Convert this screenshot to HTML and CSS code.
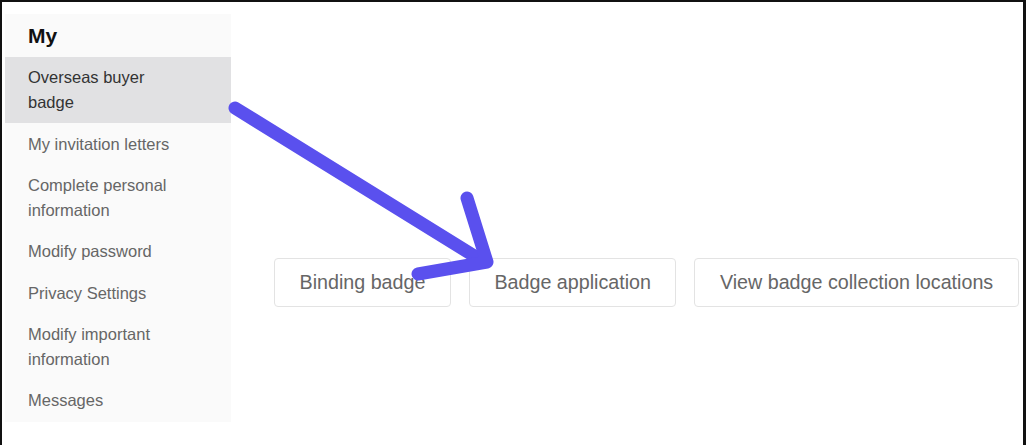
FILE: index.html
```html
<!DOCTYPE html>
<html lang="en">
<head>
    <meta charset="UTF-8">
    <meta name="viewport" content="width=device-width, initial-scale=1.0">
    <title>My - Overseas buyer badge</title>
    <link rel="stylesheet" href="styles.css">
</head>
<body>

    <div class="frame">
        <!-- Side menu -->
        <div class="sidebar">
            <h2 class="sidebar-title">My</h2>
            <div class="menu-item active">Overseas buyer badge</div>
            <div class="menu-item">My invitation letters</div>
            <div class="menu-item">Complete personal information</div>
            <div class="menu-item">Modify password</div>
            <div class="menu-item">Privacy Settings</div>
            <div class="menu-item">Modify important information</div>
            <div class="menu-item">Messages</div>
        </div>

        <!-- Badge actions -->
        <div class="content">
            <div class="actions">
                <button class="action-btn">Binding badge</button>
                <button class="action-btn">Badge application</button>
                <button class="action-btn">View badge collection locations</button>
            </div>
        </div>

        <!-- Annotation arrow drawn over the page -->
        <svg class="arrow" width="1026" height="445" viewBox="0 0 1026 445">
            <g fill="none" stroke="#5a50ee" stroke-width="13" stroke-linecap="round" stroke-linejoin="round">
                <line x1="235" y1="108" x2="484" y2="262"/>
                <polyline points="467,198 487,262 418,274"/>
            </g>
        </svg>
    </div>

</body>
</html>
```

FILE: styles.css
```css
body {
    margin: 0;
    font-family: "Liberation Sans", Arial, sans-serif;
    background: #fff;
}
.frame {
    position: relative;
    display: flex;
    align-items: flex-start;
    gap: 43px;
    height: 445px;
    box-sizing: border-box;
    border-top: 2px solid #111;
    border-left: 2px solid #111;
    border-right: 3px solid #111;
    padding: 12px 0 0 3px;
    overflow: hidden;
}
.sidebar {
    width: 226px;
    background: #fafafa;
}
.sidebar-title {
    margin: 0;
    padding: 0 0 0 23px;
    height: 43px;
    line-height: 43px;
    font-size: 21px;
    font-weight: 900;
    color: #111;
}
.menu-item {
    padding: 8.2px 20px 8.2px 23px;
    font-size: 16.5px;
    line-height: 25px;
    color: #666;
}
.menu-item.active {
    background: #e1e1e3;
    color: #333;
    padding-right: 60px;
}
.content {
    padding-top: 244px;
}
.actions {
    display: flex;
    gap: 18px;
}
.action-btn {
    height: 49px;
    padding: 0 24.5px;
    background: #fff;
    border: 1px solid #e3e3e3;
    border-radius: 4px;
    font-family: "Liberation Sans", Arial, sans-serif;
    font-size: 19.7px;
    color: #666;
}
.arrow {
    position: absolute;
    top: -2px;
    left: -2px;
    pointer-events: none;
}
```
